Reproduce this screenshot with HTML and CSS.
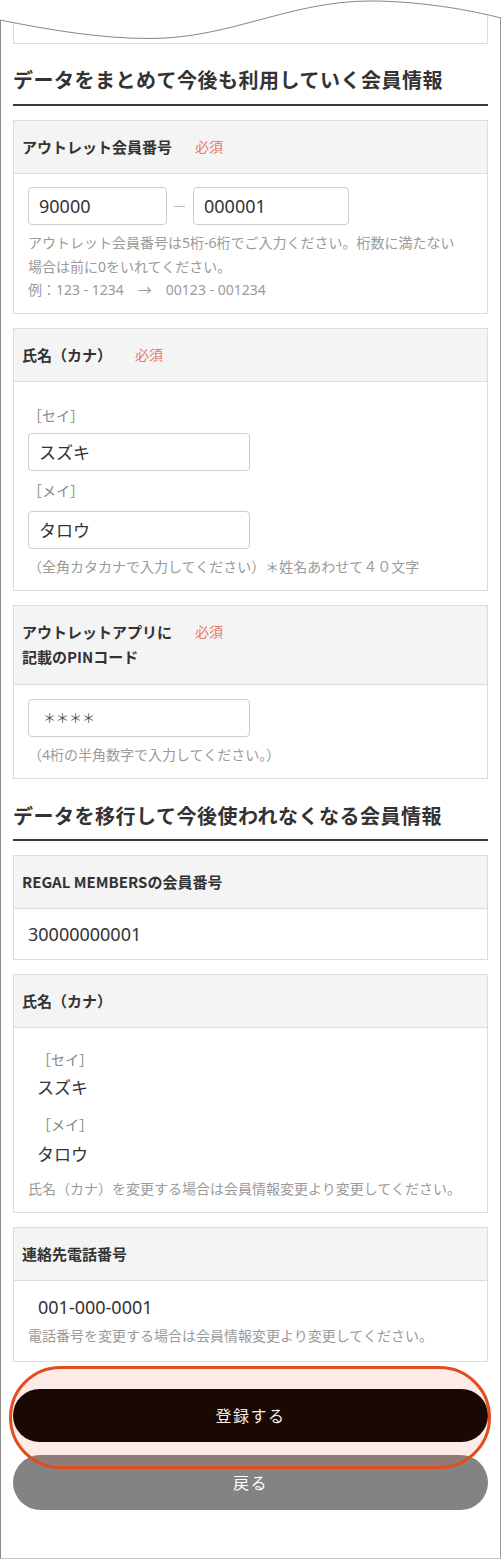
FILE: index.html
```html
<!DOCTYPE html>
<html lang="ja">
<head>
<meta charset="utf-8">
<title>会員情報の統合</title>
<link rel="stylesheet" href="styles.css">
</head>
<body>
<div class="frame">
  <svg class="cut" width="501" height="42" viewBox="0 0 501 42" aria-hidden="true">
    <path class="cut-fill" d="M0 0 L0 20 C50 30 100 38.5 150 38.5 C230 38.5 290 1 370 1 C420 1 470 10 501 18 L501 0 Z"/>
    <path class="cut-line" d="M0 20 C50 30 100 38.5 150 38.5 C230 38.5 290 1 370 1 C420 1 470 10 501 18"/>
  </svg>

  <div class="card card-prev"></div>

  <h2 class="section-title">データをまとめて今後も利用していく会員情報</h2>

  <section class="card">
    <div class="card-head"><span class="label">アウトレット会員番号</span><span class="req">必須</span></div>
    <div class="card-body">
      <div class="input-row">
        <input class="field field-a" type="text" value="90000">
        <span class="sep"></span>
        <input class="field field-b" type="text" value="000001">
      </div>
      <p class="help help-first">アウトレット会員番号は5桁-6桁でご入力ください。桁数に満たない<br>場合は前に0をいれてください。<br>例：123 - 1234　<span class="arrow">→</span>　00123 - 001234</p>
    </div>
  </section>

  <section class="card">
    <div class="card-head"><span class="label">氏名（カナ）</span><span class="req">必須</span></div>
    <div class="card-body">
      <div class="sub-label">［セイ］</div>
      <input class="field field-name" type="text" value="スズキ">
      <div class="sub-label sub-label-2">［メイ］</div>
      <input class="field field-name field-name-2" type="text" value="タロウ">
      <p class="help">（全角カタカナで入力してください）＊姓名あわせて４０文字</p>
    </div>
  </section>

  <section class="card">
    <div class="card-head card-head-2"><span class="label">アウトレットアプリに<br>記載のPINコード</span><span class="req">必須</span></div>
    <div class="card-body">
      <input class="field field-name field-pin" type="text" value="＊＊＊＊">
      <p class="help">（4桁の半角数字で入力してください。）</p>
    </div>
  </section>

  <h2 class="section-title section-title-2">データを移行して今後使われなくなる会員情報</h2>

  <section class="card">
    <div class="card-head"><span class="label">REGAL MEMBERSの会員番号</span></div>
    <div class="card-body card-body-value">
      <div class="value">30000000001</div>
    </div>
  </section>

  <section class="card">
    <div class="card-head"><span class="label">氏名（カナ）</span></div>
    <div class="card-body card-body-names">
      <div class="sub-label indent">［セイ］</div>
      <div class="name-value indent">スズキ</div>
      <div class="sub-label indent sub-label-3">［メイ］</div>
      <div class="name-value indent name-value-2">タロウ</div>
      <p class="help help-names">氏名（カナ）を変更する場合は会員情報変更より変更してください。</p>
    </div>
  </section>

  <section class="card">
    <div class="card-head"><span class="label">連絡先電話番号</span></div>
    <div class="card-body card-body-value">
      <div class="value phone">001-000-0001</div>
      <p class="help help-phone">電話番号を変更する場合は会員情報変更より変更してください。</p>
    </div>
  </section>

  <div class="actions">
    <button class="btn btn-primary" type="button">登録する</button>
    <button class="btn btn-back" type="button">戻る</button>
    <div class="highlight" aria-hidden="true"></div>
  </div>
</div>
</body>
</html>
```

FILE: styles.css
```css
* { box-sizing: border-box; }

html, body {
  margin: 0;
  padding: 0;
  background: #fff;
}

body {
  width: 501px;
  font-family: "Noto Sans", "Noto Sans CJK JP", sans-serif;
  color: #333;
}

.frame {
  position: relative;
  width: 501px;
  border-left: 1px solid #8e8a88;
  border-right: 1px solid #9a9a9a;
  border-bottom: 1px solid #c8c8c8;
  padding: 0 12px 48px;
}

.cut {
  position: absolute;
  top: 0;
  left: -1px;
  z-index: 3;
}
.cut-fill { fill: #fff; }
.cut-line { fill: none; stroke: #8a8686; stroke-width: 1; }

.card {
  border: 1px solid #dcdcdc;
  background: #fff;
  margin-top: 14px;
}

.card-prev {
  height: 44px;
  margin-top: 0;
  border-top: none;
}

.section-title {
  margin: 22px 0 0;
  font-family: "Noto Sans CJK JP", sans-serif;
  font-size: 20px;
  line-height: 28px;
  letter-spacing: 0.5px;
  font-weight: 700;
  color: #333;
  padding-bottom: 10px;
  border-bottom: 2px solid #3a3a3a;
}
.section-title-2 { margin-top: 23px; padding-bottom: 9px; }

.card-head {
  display: flex;
  align-items: flex-start;
  background: #f4f4f4;
  border-bottom: 1px solid #dcdcdc;
  padding: 13px 8px 14px;
  line-height: 25px;
  font-size: 15px;
}

.card-head-2 { padding-bottom: 15px; }

.label {
  font-family: "Noto Sans CJK JP", sans-serif;
  font-weight: 700;
  color: #333;
}

.req {
  margin-left: 23px;
  font-family: "Noto Sans CJK JP", sans-serif;
  font-size: 14px;
  color: #e7776b;
  font-weight: 400;
}

.card-body {
  padding: 14px 14px 12px;
}

.card:nth-of-type(1) .card-body { padding-top: 13px; padding-bottom: 11px; }

.input-row {
  display: flex;
  align-items: center;
}

.field {
  display: block;
  height: 38px;
  border: 1px solid #cdcdcd;
  border-radius: 4px;
  padding: 0 10px;
  font-family: "Noto Sans", "Noto Sans CJK JP", sans-serif;
  font-size: 18px;
  color: #333;
  background: #fff;
  outline: none;
  margin: 0;
}

.field-a { width: 139px; }
.field-b { width: 156px; }

.sep {
  width: 11px;
  height: 1px;
  background: #bdbdbd;
  margin: 0 8px 0 7px;
}

.field-name {
  width: 222px;
  margin-top: 7px;
  font-family: "Noto Sans CJK JP", sans-serif;
  font-size: 17px;
}
.field-name-2 { margin-top: 10px; }

.field-pin {
  margin-top: 0;
  font-size: 13px;
  padding-left: 14px;
  color: #555;
}

.sub-label {
  margin-top: 8px;
  font-family: "Noto Sans CJK JP", sans-serif;
  font-size: 14px;
  line-height: 22px;
  color: #888;
}

.help {
  margin: 6px 0 0;
  font-size: 14px;
  line-height: 23px;
  color: #9a9a9a;
}
.help-first { line-height: 23.5px; }
.arrow { font-family: "Noto Sans CJK JP", sans-serif; }

.card-body-value {
  padding: 13px 14px 13px;
}

.value {
  font-size: 18px;
  line-height: 24px;
  color: #333;
}

.phone {
  padding-left: 10px;
  line-height: 26px;
}

.help-phone { margin-top: 4px; }

.card-body-names {
  padding-top: 6px;
}

.indent { padding-left: 9px; }

.name-value {
  margin-top: 4px;
  font-family: "Noto Sans CJK JP", sans-serif;
  font-size: 17px;
  line-height: 26px;
  color: #333;
}
.sub-label-3 { margin-top: 13px; }
.name-value-2 { margin-top: 6px; }
.help-names { margin-top: 10px; }
.card-body-names .sub-label:first-child { margin-top: 14px; }

.card:last-of-type .card-body-value { padding-bottom: 14px; }

.actions {
  position: relative;
  margin-top: 27px;
  display: flex;
  flex-direction: column;
  gap: 13px;
}

.btn {
  display: block;
  width: 100%;
  border: none;
  border-radius: 30px;
  color: #fff;
  font-family: "Noto Sans CJK JP", sans-serif;
  font-size: 16px;
  letter-spacing: 1.5px;
  padding: 0;
}

.btn-primary {
  height: 53px;
  background: #000;
}

.btn-back {
  height: 55px;
  background: #838383;
}

.highlight {
  position: absolute;
  top: -23px;
  left: -4px;
  right: -3px;
  height: 103px;
  border: 3px solid #e24d1e;
  border-radius: 52px;
  background: rgba(226, 74, 32, 0.11);
  pointer-events: none;
}
```
